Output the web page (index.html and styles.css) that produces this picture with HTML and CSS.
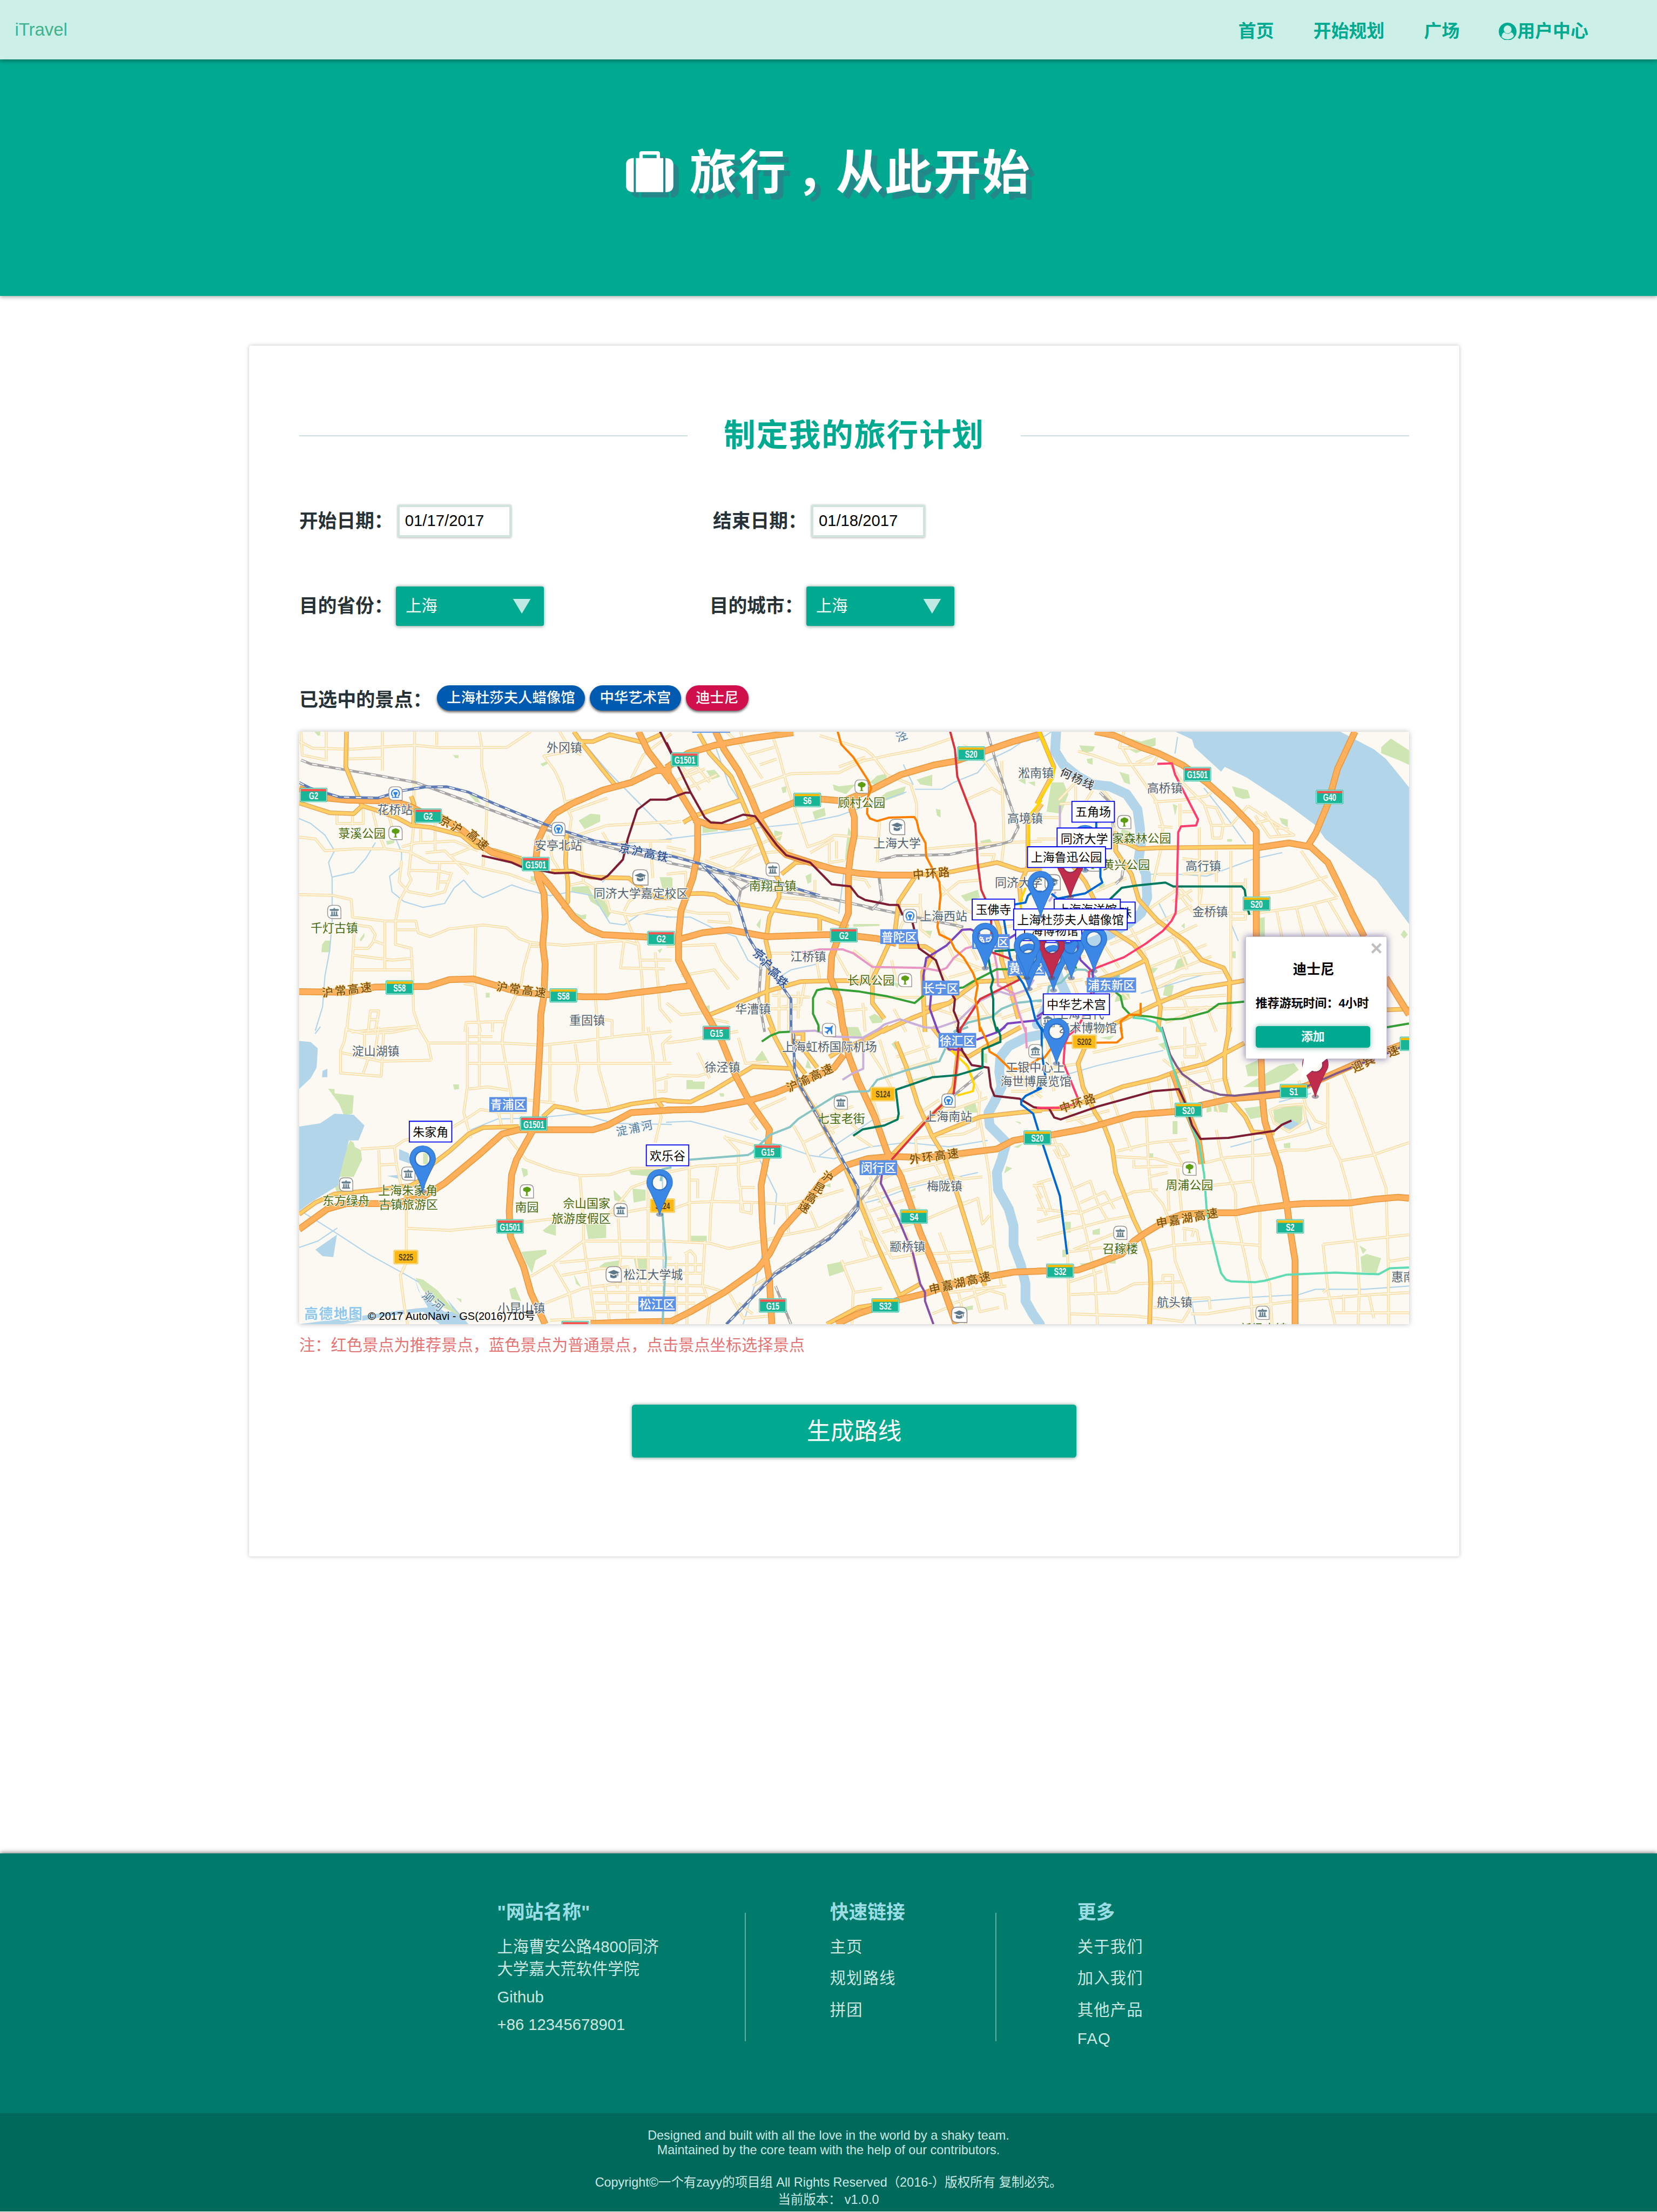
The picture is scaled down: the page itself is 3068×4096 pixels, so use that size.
FILE: index.html
```html
<!DOCTYPE html>
<html lang="zh-CN">
<head>
<meta charset="utf-8">
<title>iTravel</title>
<link rel="stylesheet" href="styles.css">
</head>
<body>
<header class="navbar">
  <a class="brand">iTravel</a>
  <nav class="nav-links">
    <a>首页</a><a>开始规划</a><a>广场</a>
    <a class="user-link"><svg class="user-icon" viewBox="0 0 37 36"><circle cx="18" cy="18" r="18" fill="currentColor"/><path d="M5.700 29Q6.500 20.500 11 19.300Q18 26 25 19.300Q29.500 20.500 30.700 27Q26 33.600 18 33.600Q10 33.600 5.700 29Z" fill="#ccefe8"/><ellipse cx="18" cy="13.600" rx="7.900" ry="8.200" fill="#ccefe8"/></svg>用户中心</a>
  </nav>
</header>
<section class="hero">
  <h1 class="hero-title"><svg class="bag-icon" viewBox="0 0 97 83"><path fill="#fff" fill-rule="evenodd" d="M27 14V5Q27 0 32 0H64Q69 0 69 5V14H75.600V83H20V14ZM34 14H62V7H34ZM15.700 14V83H14Q0 82 0 69V28Q0 15 14 14ZM80 14H82Q96 15 96 28V69Q96 82 82 83H80Z"/></svg><span>旅行<span class="comma">，</span>从此开始</span></h1>
</section>
<main class="card">
  <div class="card-head"><i></i><h2>制定我的旅行计划</h2><i></i></div>
  <div class="row dates">
    <label>开始日期：<span class="date">01/17/2017</span></label>
    <label>结束日期：<span class="date">01/18/2017</span></label>
  </div>
  <div class="row places">
    <label>目的省份：<span class="select">上海<b></b></span></label>
    <label>目的城市：<span class="select">上海<b></b></span></label>
  </div>
  <div class="picked"><span class="picked-label">已选中的景点：</span><span class="tag">上海杜莎夫人蜡像馆</span><span class="tag">中华艺术宫</span><span class="tag hot">迪士尼</span></div>
  <div class="map">
    <svg class="map-canvas" viewBox="606 1482 2248 1200">
      <defs>
        <g id="minor">
          <path class="a" d="M20,29L25,150 125,175M12,80L70,115 230,120 400,105 500,100 600,112 880,110 980,29M125,29V180M360,29V230M495,29L492,290 490,520 480,640 470,760 480,790 430,900 415,1000 415,1120 480,1140 487,1300 490,1460 520,1568M587,29V100M765,29L775,110 775,210 800,340 790,600 780,720M210,170L360,165M12,570L80,580 120,640 250,630 370,630 470,645 560,700 680,700 780,730 890,760 1000,810M170,450V500H280V420M235,450V510M320,440L340,540 370,630M385,450L400,520M440,620L500,600 660,590 760,640M580,500V640M520,530V600M540,650L620,640 720,760M640,670L740,620M440,690L430,800 470,850 560,870 620,850 650,750M470,740L600,745 650,760M600,700L590,840M600,800H640M12,865L150,868 230,890 235,980 370,1000 500,1000 510,1060 560,1080 640,1040 780,1020 880,1035 930,1090 980,1110 1120,1125 1270,1110 1370,1100 1430,1120M245,1000L235,1200 225,1400 210,1568M370,1000V1250M420,1045H510M250,1020L310,1030 330,1070 320,1110 300,1140 240,1140M320,1100L370,1120M235,1175L400,1200 490,1190M230,1250H485M750,1030L745,1310 760,1500 770,1568M980,1110L950,1240 940,1320 880,1480 865,1568M980,1130H1030M1250,1110V1400L1258,1500 1320,1510V1568M1370,1100L1355,1240 1540,1245M1440,1200H1568M1430,1120L1445,1300 1450,1568M1500,1160L1510,1300 1520,1450 1568,1520M700,1320L745,1330M300,1568L310,1460 345,1460 330,1568M305,1505H345M230,1568L500,1540M705,1568L710,1520 870,1515M820,1515V1568M1100,29L1140,110 1190,150M1190,120L1035,155 1080,230 1110,310 1125,400 1150,470 1140,560M1125,390L1300,330M1140,440L1300,370M1400,270L1450,150 1568,40M1150,570L1300,510 1450,500 1568,490M1130,620L1190,610 1200,800M1050,560L1070,680 1110,760M1280,545L1310,610 1400,590 1568,590M1480,600L1490,780M1130,820L1200,800 1250,840 1300,900 1310,950 1400,970 1520,940 1568,940M1370,950L1390,900 1450,850M1370,960L1400,1050 1430,1120"/>
          <path class="b" d="M250,29L310,100 335,150 450,110M335,150L400,270M310,29L320,100M390,200L460,170M440,40L470,150 500,290 540,440 590,620 660,590 700,560 890,580M340,320L520,245 720,240 820,180 930,150 1060,120 1200,60M640,50L720,80 830,120 860,150 920,250 1020,300 1045,400 1045,480M720,210L830,160M60,200L140,330M100,170L180,290M40,280L160,220M70,330L210,250M60,250L130,210M0,500L60,490M0,620L80,640M20,650L150,700M180,680L400,600 480,560M270,740L360,620M250,740L400,650 530,640M160,690L270,740 420,800M480,850L620,850 620,790M0,760L80,750 80,850M0,930L130,960 260,960 270,1010 170,1000M480,880L600,890 720,950M680,600L680,700 740,690M710,590V680M600,650L700,580M890,490L880,700M1090,630L1220,615 1390,600 1568,590M1400,180L1410,600 1400,700M1240,100L1310,150 1400,300M1250,380L1360,320 1400,350M1310,660L1370,660 1360,700M770,780L830,790 850,830M960,920H1060L1070,980M1140,810L1190,880 1260,950 1350,980M1150,870L1220,800 1310,790M1060,860L1060,1040 1100,1080M990,1000L960,1080M430,1165L520,1165M0,1130L200,1120 230,1200 300,1300M60,1280L200,1250 260,1350M620,1150L640,1300M710,1170L760,1280M940,1200L960,1310M780,1150L860,1230 850,1300M860,1390L1060,1390M480,1440L560,1430 580,1300M440,1380L600,1390M470,1350V1568M510,1380V1568M550,1360V1500M430,1450H560M670,1410L740,1460 840,1450M180,1500L260,1520M0,1420L60,1480 150,1470M820,1420L830,1568M1100,1180L1200,1350 1290,1420M1150,1050L1200,1190 1330,1250M1200,1000L1260,1100 1300,1200M1100,1440L1250,1500 1400,1480M1180,1420L1220,1568M1300,1400L1390,1568M950,1450L1000,1568M1380,1040L1500,1010M1400,1200L1568,1150M1420,1300L1568,1230M1430,1400L1568,1340M1500,960L1540,1260M1180,1290L1380,1220M1400,1500L1568,1430"/>
          <path class="c" d="M170,130L230,150 340,200 480,195 500,150M360,29L340,110 440,120M350,110L390,200 430,270 490,380 520,520 510,640M480,390L600,380 700,360 720,340M410,190L480,150M545,180L600,290 690,400 720,510 800,510 870,410M590,400V520M500,515L560,520M600,440H650M670,520V900M690,410L740,420 770,500 760,575 725,575 720,515M870,410L1060,560 960,570 900,460M940,440L1000,560M900,500L960,480M980,520L1040,530M740,640L740,800M800,640V1568M500,760H580M510,640L480,800M600,680L740,700M600,760L740,750M860,780V990H800M800,810H860M1090,640L1160,770 1240,880M910,860L1000,850 1060,830 1200,770M560,820L640,950 660,960 900,960 1080,930 1240,880M590,830L640,900M640,840L560,900M680,830L670,920 740,920M990,950L1010,1080M1070,930L1100,1080M1140,910L1200,1080M1200,890L1290,1080M90,380L160,290 260,310 320,400V560M95,400L200,390 230,330M0,470H90M0,580H90M160,310V400M200,380L260,500M390,1000L600,820M420,1060L640,920M300,1120L420,1060M440,1150L660,1020M460,1240L700,1120M480,1300L720,1180M500,1340L600,1280 780,1260M380,1020L450,1180M560,1060L620,1250M600,1100L660,1180M280,1130L340,1240M520,1450L790,1440M530,1520L700,1440 740,1568M600,1380L650,1568M510,1400L780,1380M240,1200L380,1400M250,1450L330,1350M0,1240L200,1180M0,1330L190,1300M100,1180L190,1440M250,980L330,1090M240,850L370,780"/>
          <path class="d" d="M210,0L200,70 185,110V215L355,230 365,30M190,120L350,160 565,155M205,10L280,30 400,25 510,0 550,75 860,75 1030,85 1200,65 1370,40 1568,20M285,30V110M300,150L280,215M345,0L325,150M550,75L565,155M715,0V280L700,400 730,520M765,0V280M865,0L860,75 880,200 900,330V450M720,170H1568M720,290L800,280 885,295M720,45H820M1060,85V350M1165,80L1180,190 1165,290 1175,350M1260,0V90L1265,200 1310,380M1320,0V45M1470,0L1490,130 1500,350 1525,420 1500,540M1568,40L1530,80 1540,160M1500,250L1568,230M1545,250V300H1510M650,470L710,430 770,385 850,400 960,400M845,400L860,470M960,340L1080,355M270,570L410,560 450,530 490,520M345,575L350,750M410,560L420,650 440,750M345,645L420,640M460,790V940L640,950 820,930 1040,900 1300,880 1450,850 1568,840M460,940V1100L435,1160 450,1290 465,1388M880,510L960,620 1080,670 1190,695 1310,690 1400,660 1568,660M1185,695L1200,900 1200,1000 1220,1150 1250,1388M1345,895L1355,1080 1340,1220M1200,1000H1568M980,1165L1070,1105 1200,1000M1070,1105L1140,1240 1160,1388M1040,1290L1200,1220 1340,1200 1568,1205M1100,1100L1340,1075 1568,1080M1110,1160L1260,1130 1390,1120M1060,1370L1240,1360M1240,1240H1568M1250,1290H1568M1250,1330H1420M1290,1200L1310,1388M1385,1120V1388M1470,700V1290M1420,1070L1440,1240M1300,880L1350,820 1400,750 1470,720"/>
          <path class="e" d="M0,75L100,60 300,20M0,225L130,230 210,200M130,120L180,240M300,50L330,170 420,160M350,440L400,380 500,330M350,440L380,480M240,510L300,580 300,700 320,860M240,515L390,560M300,750H370M310,750V860L355,870V820M0,680L130,650 300,640 390,620M95,630V1000M215,640L185,850 180,1000M100,715H130V800M0,860L100,820 200,815 390,820 500,830 620,800 740,760M0,1000L180,1010 260,1035 400,1000 500,970 640,940 760,870M500,820L510,960M600,860L630,940M530,460L570,540 620,680M570,540L720,460M780,500L860,560M620,360L700,500M640,430L780,370M700,380L800,480M750,650L900,600M740,640L800,760 840,860 880,960 940,1080M800,760L960,680 1120,640 1350,570M840,800L1000,740 1180,690 1240,710 1320,700M850,860L1040,790M880,900L1060,850M900,960L1080,900 1270,810M940,1080L1100,1050M1120,640L1180,760M850,700L960,960M960,680L1000,740M1040,520L1050,650M1040,520L1240,500 1300,470 1310,300M1310,430L1350,700 1360,900 1370,1020 1400,1210M1240,830L1300,800 1320,920 1350,880M1180,700L1240,750M810,950L830,1030 850,1080 740,1110 730,1090M730,1090L780,1230 775,1388M780,1240L900,1220M850,1080L940,1050M810,980L880,1010M1000,960L1060,1200M1100,1060L1270,1050 1370,1020M1130,1100L1280,1090M1140,960L1180,1080 1200,1190M1180,1240L1420,1210M1200,1290L1350,1230 1410,1250 1420,1320M1220,1240L1250,1388M1280,1210L1310,1330 1390,1310M1110,1340L1200,1300M1530,740H1568M1540,740L1568,800M1550,990H1568M0,1110H150M0,1150H150M85,1050V1388M75,1060L100,1045 120,1070V1150M0,1205L160,1210 250,1240M40,1100V1388M160,1000L150,1200 180,1300 170,1388M0,1290H120M0,1250H170M260,1240L320,1360 430,1350M300,1290L360,1340M360,1210L440,1160M960,140L1100,90M980,200L1130,150M1000,260L1110,240M890,60L940,240M1050,0L1120,240M1060,400L1140,340M1250,170L1310,320M1110,420L1340,330M820,60L900,200 960,330M860,330L890,440 990,420M1480,210L1530,330M1440,300H1568M1420,200L1568,330"/>
          <path class="f" d="M70,520L110,640 150,760 180,860 210,1000 240,1170 250,1388M0,550L100,550 130,600 90,610 70,570M0,730L60,710M140,760L220,720 250,820 290,900M180,820L280,770 320,850M0,850L180,870 360,790 400,770 500,760M0,910L170,860M0,990L200,930 300,900 400,880M150,1040L330,960M130,1050L270,1030M20,730L60,860M0,780L40,880M125,1000L135,1388M135,1190L270,1140M140,1250L330,1240 400,1200 600,1190M280,1110L300,1250M140,1340L400,1350 600,1375 630,1320 620,1240 570,1090 560,940 520,830 470,760 460,640 455,500 450,400M330,580L480,540 620,525M320,605L490,615 560,640 620,650M400,655L540,650M400,620V660M550,540L600,640M540,740L545,860M580,660L600,900M460,700L540,680M580,590L630,580M690,635L780,610 950,595 1030,575 1110,575 1220,550 1200,500 1200,260M720,740L890,720M890,500L890,720 920,850 920,1080 960,1200 970,1388M740,480L760,600 820,780 820,880 860,1080 880,1200 890,1388M440,1050L560,1020 740,1005 920,1020M600,940L660,950 670,1010M610,950V1000M650,940L640,980M480,1310H560V1160H520V1200M560,1310L620,1270 710,1265 715,1320M635,1340L700,1340 860,1310 1060,1280 1380,1250 1535,1240M1080,250L1110,370 1150,440 1200,460M980,530L1130,490 1200,460M1220,550L1250,620 1290,780 1300,900 1320,1050 1330,1230 1325,1388M1260,210L1310,340 1380,560 1440,750 1450,1150 1450,1388M1250,625L1380,600 1535,540M1260,810L1300,830M1180,1015L1535,970M1180,1015L1200,1220 1180,1240M1200,1230L1230,1388M1230,1335H1535M1265,1250V1330M1370,1250L1390,1360M1450,1095L1535,1080M540,100L700,80M610,0V140H660V80M640,0L720,260 750,400M520,150L640,260M540,220L560,390M300,300L350,460 390,580M460,260L480,390M600,160L640,350M560,290L790,240M540,240L700,200M960,390L1000,370 1100,360 1110,440 1040,490 980,450ZM120,440L300,390M130,400L210,470M230,120L500,50M60,190L180,170M40,60L70,300"/>
        </g>
        <g id="major">
          <path class="a" d="M210,29L207,210 240,310 275,410M12,395L140,445 240,450 275,410 330,430 420,470 480,510 560,520 690,560 750,620 830,640 940,680M490,520L492,400 480,360M1160,29L1200,100 1270,210 1330,300M1180,80L1240,80 1310,45 1450,85 1530,40M1065,745L1150,745 1230,775 1390,780 1440,830 1500,880 1568,880M1130,555L1125,700 1135,800 1135,900 1115,940"/>
          <path class="b" d="M135,40L180,140 270,260 310,370 380,570 420,700 470,790 470,880 430,980 415,1100 430,1180 420,1350 420,1470 450,1568M70,495L120,460 310,380M480,760L540,700 590,700M95,860L150,858 200,865 260,905 480,950 630,975 760,1030M640,980L640,1050M180,1480L300,1420 420,1360 560,1310 740,1305 860,1310M1040,770L970,900 955,1050 920,1140 860,1300 860,1420 910,1500M1040,765L1180,750 1380,700 1480,740 1568,730M970,1130L1080,1130 1120,1160 1070,1260 1075,1430 1080,1568M1350,900L1390,1040 1400,1200 1430,1320 1470,1500M1075,1450L1180,1420 1300,1310 1420,1305 1568,1260M900,1568L1020,1500 1180,1420M1480,900L1475,820 1510,720 1510,500 1568,400"/>
          <path class="c" d="M10,29L70,210 60,260 0,400M325,540L325,640 390,760 420,890 500,1000 620,1110 680,1200 770,1240 795,1300 790,1568M325,590L370,600 420,630 500,625 912,620M150,720L200,800 240,900M300,1040L400,1120 450,1200 480,1320 510,1440 500,1568M200,1320L350,1260 450,1200M240,1568L330,1520 500,1420 640,1350 855,1305M1440,1455L1535,1450"/>
          <path class="d" d="M12,875L80,820 160,780 350,760 480,740 540,700 570,640 640,580 720,500 780,470 930,465M1030,420L1080,370 1130,380 1200,400 1300,390 1400,360 1530,340 1568,345M450,795L520,790M1510,345L1530,375"/>
          <path class="e" d="M430,0L510,170 560,280 640,430 740,640 800,800 880,1020 960,1220 980,1270M0,345L100,350 190,300 360,185 530,195M530,30L570,30 570,70 530,70ZM530,150L580,220M550,70L630,190M680,140L740,100 850,50 930,0M670,1388L800,1310 860,1300M980,1250L1060,1200M960,70L1000,180 1050,360 1110,510 1160,600 1220,800 1270,980 1330,1210M1110,510L1220,460 1310,420 1470,400 1568,390M1110,0L1180,100 1260,140 1350,80 1480,0M940,600L1090,430 1150,370 1200,280 1220,100"/>
          <path class="f" d="M200,90L170,170 190,280 240,400 280,470 310,560 325,680 400,900 430,970 465,1090 470,1200 465,1388M0,385L120,380 240,330 350,280 500,240 580,205 700,170 780,120 855,75M795,0L775,120 775,240 800,340 860,420 890,490 980,495"/>
        </g>
        <g id="motorway">
          <path class="a" d="M12,320L60,345 130,370 210,380 400,385 470,410 520,440 600,465 690,530 760,600 820,650 900,680 990,720 1060,820 1110,900 1160,980 1220,1040 1280,1070 1440,1080 1568,1090M1568,225L1500,230 1400,290 1280,330 1150,400 1080,450 1040,510 1010,590 1000,700 1010,780 1035,860 1040,980 1030,1120 1040,1220 1035,1380 1022,1480 1020,1568M12,1362L220,1365 330,1338 550,1335 640,1300 740,1297 820,1325 930,1365 1040,1375 1200,1388 1300,1388 1400,1370 1568,1345M1430,29L1470,130 1520,210 1568,290"/>
          <path class="b" d="M0,215L90,140 200,100 350,65 530,35M0,230L50,330 110,450 130,500 130,650 110,780 60,950 50,1080 50,1200 100,1320 150,1440 210,1568M205,29L240,120 300,230 350,360 390,480 450,600 500,660 600,700 700,735 800,755 900,765 1040,765M115,480L180,510 260,520 330,500 420,450 540,390 600,370 640,375 740,385 860,325 980,250 1120,200 1210,180 1330,130 1450,80 1568,40M760,370L785,470 785,560 770,650 760,750 760,960 720,1080 690,1180 685,1290 720,1400 740,1568M50,1095L150,1060 260,1045 420,1080 660,1070 740,1070 880,1090 960,1115M0,1345L110,1330"/>
          <path class="c" d="M240,29L320,50 430,110 500,140 600,200 700,290 800,400 870,490 905,540 905,1080M1312,29L1240,220 1200,400 1150,550 1120,610M905,625L1040,600 1130,620 1200,700 1260,850 1300,960 1350,1080M1440,1290L1535,1480M905,1070L930,1568"/>
          <path class="d" d="M1022,0L1015,150 1000,420 985,490 920,620 900,690 890,860 895,980 950,1120 980,1240 1040,1388M12,945L130,850 210,825 400,825 520,800 620,730 760,600 860,500 930,480 1240,480 1300,460 1400,400 1568,388M1230,1385L1400,1378 1568,1375"/>
          <path class="e" d="M0,388L150,385 340,345 450,310 600,240 700,190 740,130M225,50L290,230 345,345 430,480 420,600 395,740 400,900 410,1050 430,1180 440,1388M740,0L760,130 800,250 870,420 920,580 980,700 1020,830 1060,960 1150,1200 1210,1388M0,1385L100,1330 240,1240 380,1130 430,1060 480,950 560,850 650,720 740,650 840,615 940,605 1090,610 1380,570 1450,530 1500,520 1568,510M710,1388L800,1340 880,1310 970,1275 1080,1245 1180,1205 1300,1175 1450,1145 1568,1140"/>
          <path class="f" d="M0,1140L170,1135 270,1095 350,1060 400,1000 450,960 540,900 600,875 700,868 820,868 900,850 1040,830 1100,825 1290,822 1390,805 1490,795 1535,800M0,515L58,505 200,475 280,450 400,410 570,395 680,365 800,335 920,325 1000,315 1110,275 1300,180 1440,110 1535,70M925,150L930,330 940,440 970,550 1000,650 1030,820 1045,950 1065,1090 1065,1388M560,210L610,370 640,450 665,520 680,640"/>
        </g>
        <g id="rail-gray">
          <path class="a" d="M20,175L60,195 300,245 500,290 700,380 1010,520 1230,600 1568,700"/>
          <path class="b" d="M0,700L250,760 430,840 700,890 850,930 1000,970 1240,1030M885,750L900,890 860,940 820,920M890,690L960,665 1180,660 1400,605 1440,590 1470,520 1430,380 1380,200 1340,29M260,780L310,840 300,900M350,810L310,840M395,1220L385,1400 410,1568"/>
          <path class="c" d="M260,340L300,390 315,520M355,740L350,780 325,810"/>
          <path class="e" d="M1320,210L1200,320 1090,430 930,620 840,770 780,850 700,960 450,1150 250,1388M455,1210L520,1388"/>
        </g>
        <g id="rail-blue">
          <path class="a" d="M12,290L60,320 180,365 340,370 430,335 540,313 630,312 720,340 830,400 1040,505 1110,535 1250,590 1400,620 1568,670"/>
          <path class="b" d="M0,660L150,710 230,745 450,800 640,870M150,715L240,830 300,920 340,1080 400,1200 480,1330 520,1400V1568"/>
          <path class="e" d="M530,30L535,200 560,280 700,550 800,750 800,850 770,890 680,990 450,1160 250,1388"/>
        </g>
        <g id="sh-g"><rect x="-28" y="-14.5" width="56" height="29" rx="3" fill="#18b596"/><rect x="-26.5" y="-13" width="53" height="26" rx="2" fill="none" stroke="#b5ecdf" stroke-width="1.4"/><path d="M-25.5-12H25.5V-7.5H-25.5Z" fill="#ff5350"/></g>
        <g id="sh-s"><rect x="-28" y="-14.5" width="56" height="29" rx="3" fill="#18b596"/><rect x="-26.5" y="-13" width="53" height="26" rx="2" fill="none" stroke="#b5ecdf" stroke-width="1.4"/><path d="M-25.5-12H25.5V-7.5H-25.5Z" fill="#ffb900"/></g>
        <g id="sh-y"><rect x="-25" y="-14.5" width="50" height="29" rx="3" fill="#fcb814"/><rect x="-23.5" y="-13" width="47" height="26" rx="2" fill="none" stroke="#ffe49b" stroke-width="1.4"/></g>
        <path id="poi-box" d="M-13.500-4Q-13.500-13.500-4-13.500H4Q13.500-13.500 13.500-4V13.500H-4Q-13.500 13.500-13.500 4Z" fill="#fff" stroke="#948f8c" stroke-width="1.5"/>
        <g id="tree"><use href="#poi-box"/><path d="M-7.500-4Q-7-8-3-8Q0-11 4-8Q9-7 8-3Q7 1 3 1L1.500 2V7L4 9H-4L-1.500 7V2L-4 0Q-8 0-7.500-4Z" fill="#5d9d12"/></g>
        <g id="temple"><use href="#poi-box"/><path d="M0-9L2-6H8L10-4L7-2H-7L-10-4L-8-6H-2ZM-6-1H-3V6H-1.500V-1H1.500V6H3V-1H6V6H8V8.500H-8V6H-6Z" fill="#67818f"/></g>
        <g id="museum"><use href="#poi-box"/><path d="M0-9L9-4V-2H-9V-4ZM-7-1H-4V5H-7ZM-1.500-1H1.500V5H-1.500ZM4-1H7V5H4ZM-9 6H9V8.500H-9Z" fill="#67818f"/></g>
        <g id="station"><use href="#poi-box"/><path d="M-5 6A8 8 0 1 1 5 6" fill="none" stroke="#2f83e0" stroke-width="2.400"/><path d="M-4-3H4V1L1.500 3V7H7V9H-7V7H-1.500V3L-4 1Z" fill="#2f83e0"/></g>
        <g id="school"><use href="#poi-box" transform="scale(1.15)"/><path d="M0-9L12-4L9-2.800V4H7.500V-2L0 1L-12-4ZM-7 0L0 3L6 0V6Q0 10-7 6Z" fill="#60798a"/></g>
        <g id="plane"><use href="#poi-box"/><path d="M8-8Q9-10 6-8.500L2-5L-8-6L-9-4L-1-1L-5 3L-8 3L-9 4L-5 6L-3 9L-2 8V5L2 1L5 9L7 8L6-2Z" fill="#2f83e0"/></g>
        <g id="pin-shape"><ellipse cx="0" cy="-1" rx="7" ry="4" fill="#44516a" opacity=".5"/><path fill-rule="evenodd" d="M0 0Q-4-16-21-51A26 26 0 1 1 21-51Q4-16 0 0ZM14.500-66A14.500 14.500 0 1 0-14.500-66A14.500 14.500 0 1 0 14.500-66Z" stroke-width="1.200"/><path d="M15.500-66A15.500 15.500 0 1 1-15.500-66A15.500 15.500 0 1 1 15.500-66" fill="none" stroke="#123f80" stroke-opacity=".25" stroke-width="2"/></g>
      </defs>
      <rect x="606" y="1482" width="2248" height="1200" fill="#fcf9f2"/>
      <g class="green">
        <path class="a" d="M75,29H100V50L165,55 90,50ZM655,150H678V165H665ZM1020,195L1055,178 1050,195 1030,208ZM1180,485L1230,450 1270,455V490L1205,530ZM720,350L745,345 770,395 785,400 750,390ZM375,590L410,585V600L380,610ZM1150,825L1220,820 1240,870 1290,900 1315,960 1300,985 1270,930 1230,900 1215,860 1150,850ZM1155,950L1190,970 1212,965 1210,990 1185,990ZM120,1100H143V1120L140,1160H105L108,1120ZM265,1095L285,1060 285,1080 270,1105ZM792,1368H808V1392H792ZM1518,775H1568V840L1530,835ZM1510,1150L1530,1140 1520,1165ZM980,770H1000V795H980Z"/>
        <path class="b" d="M150,490L200,485 215,540 150,550ZM165,230L200,225 225,260 190,275ZM450,535L485,545 475,590 450,580ZM480,315L500,310V340L485,345ZM610,440L660,420 665,460 620,480ZM695,300L720,310 790,300 750,350 700,330ZM850,290L880,255 920,245V290L880,310ZM920,340L1000,310 990,350 900,390 860,395ZM1045,275L1110,250V310L1060,300ZM760,520L780,560 765,650 745,700 750,620ZM580,770L605,755V800L590,810ZM0,780H25V825H0ZM1125,425L1145,430V470L1130,460ZM1230,870L1300,840 1310,880 1250,900ZM1310,590L1350,580 1370,610 1330,630ZM1470,280L1500,260V300ZM1510,290L1540,285V310ZM780,1015L890,1015V1025L780,1030ZM375,1020L395,985 390,1040ZM845,1490L870,1475 905,1500 900,1520 860,1525ZM940,1310L970,1320 965,1345ZM1080,1050L1110,1050 1100,1090ZM1185,750L1220,745 1200,760ZM155,1440L180,1430V1480Z"/>
        <path class="c" d="M175,100L240,105 230,130 190,140ZM205,170L230,165V200L210,190ZM370,60L430,80 490,60V100L410,140 380,120ZM340,235L380,250 385,300 360,290ZM560,400L580,410 570,460ZM805,310L870,330 880,370 850,375 820,360ZM60,290L110,290 130,350 100,450 40,440ZM1000,470L1035,480V520L1010,500ZM785,580H805V593H785ZM1420,110L1460,65 1535,125V200L1500,180 1420,140ZM1500,1070L1515,1045 1530,1070 1515,1090ZM580,1200L610,1180 625,1230 560,1270ZM530,1325L565,1330 555,1390 520,1380ZM330,1380L380,1370 385,1400 320,1415ZM805,1155H820V1190H805ZM895,990L940,980V1080H900ZM610,1010V1040L595,1025ZM350,530L385,540 400,600 340,580ZM255,805L280,810V840H258ZM460,1240L500,1240 480,1270Z"/>
        <path class="d" d="M133,288L160,290V310L240,320 235,405 200,415 180,360ZM655,268H680V290L660,293ZM225,530L240,540 245,560 270,575 275,620 240,700 180,700 195,600ZM160,740L230,710 235,750 170,775ZM940,657L965,665 968,690 950,702ZM890,1225L915,1215 940,1280 900,1270ZM940,1050L1045,1040V1060L1000,1090 985,1150 960,1100ZM1030,950L1065,920 1085,925V975L1040,960ZM1210,920H1295V985L1220,990ZM1325,760L1380,820 1330,810ZM1405,755L1460,760V810L1410,820ZM1390,670L1500,665 1500,700 1400,690ZM1410,1080H1470V1130H1420ZM1290,1100L1350,1090V1130L1265,1120ZM1160,1155L1190,1215 1170,1200ZM668,1265L690,1270V1288ZM530,590H550V640H530Z"/>
        <path class="e" d="M83,248H110V255H160L158,290H83ZM220,310H240V325H225ZM370,150L400,110 430,170 380,165ZM755,0H800L820,50 760,40ZM590,150L605,195 580,190ZM102,975H168V1005H102ZM670,1110L735,1095 745,1140 680,1165ZM940,80L960,60V110ZM1240,370L1290,350 1300,400 1250,400ZM1310,120L1340,125V170L1315,160ZM1455,440L1480,445V455ZM1420,650L1445,660 1410,685ZM1450,560L1490,545 1470,565ZM660,740L685,730V750ZM880,820L900,800V820ZM1240,1310L1280,1300V1320L1250,1325ZM1010,250L1090,230 1060,260ZM1010,770L1040,750V765Z"/>
        <path class="f" d="M850,280L1000,180 1060,170 1080,200 1020,250 930,280ZM860,180L910,155V230L870,230ZM730,350L790,360 785,400 730,395ZM700,370L720,375V395L700,400ZM855,380L920,370 930,420 880,430ZM975,390L1030,370 1095,370V430L1080,470 1040,480 980,440ZM560,440H580V500H560ZM260,50L320,40 300,60ZM1018,545L1045,540V565H1020ZM115,910H140V960H115ZM175,1105L230,1100 210,1130ZM300,1090L325,1085V1105H300ZM1335,1075L1360,1060 1420,1080 1400,1150 1340,1145ZM1330,1020L1360,1040 1345,1060ZM465,590H480V610H465ZM230,950L260,940V970H230ZM500,80L530,70V110ZM105,1040H120V1075H105Z"/>
      </g>
      <g class="water">
        <path class="c" d="M570,29L640,70 650,110 760,235 775,210 865,265 1030,400 1150,510 1190,580 1300,690 1400,790 1535,1015V315L1480,230 1440,170 1390,120 1250,29Z"/>
        <path class="d" d="M12,65L60,70 90,100 85,190 60,240 12,290ZM12,465L100,450 160,405 240,410 285,460 260,530 220,530 185,680 175,740 60,820 12,860ZM110,205L130,195V235H108ZM430,570L470,590 480,640 430,620ZM80,1040L170,970 155,1075 110,1070ZM490,1160L520,1250 620,1330 660,1330 630,1270 720,1388H600L530,1330 380,1350 200,1388H12L300,1345 500,1315 550,1310 510,1230ZM380,695L440,690 430,710Z"/>
        <path class="f" d="M1010,450L1050,430 1090,460 1060,480 1020,470ZM0,1370L10,1388H0Z"/>
      </g>
      <g class="green"><path class="d" d="M498,1172L530,1180 590,1230 650,1310 685,1350 580,1290 530,1230Z"/></g>
      <g class="stream">
        <path class="a" d="M12,475L60,500 120,560 160,640 135,700 150,780 150,1000 140,1150 120,1280 110,1440 80,1560M150,775L240,750 290,680 310,640 330,600M410,560L440,650 440,720 390,770 400,850 450,900 530,930 620,910 660,830 700,790 740,850 780,880 840,850 900,815 960,840 1060,870 1150,850 1240,870 1280,950 1310,1010 1370,1020 1440,960 1568,980M1160,29L1300,230 1420,380 1500,480 1568,560M1280,800L1360,700 1390,600 1568,580"/>
        <path class="b" d="M0,580L200,550 400,520 560,500 720,460 860,400 1000,340M1040,325L1150,325 1200,290 1300,240 1340,180 1440,120 1500,70 1568,65M200,90L260,300 330,430M0,980L100,980 200,1040 290,1080 340,1200 400,1250M480,1280L520,1250 630,1220M740,760L720,960M990,200L1030,300"/>
        <path class="c" d="M580,60L570,140M440,760H580L700,770 900,680 1010,650M690,320L760,430 860,600M500,900L540,1000M800,1010L830,1100M430,1370L700,1270M0,80L60,30"/>
        <path class="d" d="M20,860L150,950 300,1060 430,1140 510,1190M12,1030L90,1000 170,940M730,480L840,430 1000,425 1180,405 1330,450 1568,455M1530,665L1535,1388M80,30L100,0"/>
        <path class="e" d="M0,445L100,440 200,470 390,530 500,560 600,600 700,615 760,590 850,560 1000,540 1180,560 1340,530M380,600L460,780 450,920M400,1060L370,1200 320,1388M640,600L880,420M800,830L900,800 1020,750 1300,680"/>
        <path class="f" d="M40,250L250,180 520,110M640,1285L850,1265 1080,1250 1150,1225 1350,1225 1535,1210M1000,350L1130,310M800,560L930,520M1110,420L1130,480M640,1290L655,1388"/>
      </g>
      <use href="#minor" class="minor-case"/><use href="#minor" class="minor-fill"/>
      <g class="river">
        <path class="c" d="M80,29L75,130 110,200 170,260 230,300 300,310 370,350 415,430 425,520 430,600 420,680 450,760 455,880 430,960 380,1010 300,1070 200,1120 120,1150 70,1190 90,1290 120,1370 40,1440 0,1530"/>
        <path class="e" d="M1568,35L1500,50 1430,90 1395,140 1390,210 1400,280 1370,350 1345,400 1350,460 1385,500 1420,540 1400,620 1380,680 1385,760 1430,850 1450,930 1450,1020 1480,1110 1500,1200 1500,1280 1530,1340 1560,1388"/>
      </g>
      <use href="#rail-gray" class="rail gray"/><use href="#rail-gray" class="rail-dash"/>
      <use href="#major" class="major-case"/><use href="#major" class="major-fill"/>
      <use href="#motorway" class="motor-case"/><use href="#motorway" class="motor-fill"/>
      <use href="#rail-blue" class="rail blue"/><use href="#rail-blue" class="rail-dash"/>
      <g class="metro">
        <g stroke="#c8b0d8"><path class="e" d="M515,22L620,17 700,45 820,50 900,0M822,50V195L780,215 735,247"/><path class="b" d="M870,1568L910,1530 975,1503 1080,1545 1130,1548 1220,1510 1300,1415 1390,1360 1440,1380 1510,1350 1535,1300"/><path class="c" d="M95,408V520M78,850L50,900"/></g>
        <g stroke="#88c5c5"><path class="d" d="M1568,655L1530,665 1523,720M1530,870L1545,1080 1530,1388"/><path class="e" d="M95,620L340,598 360,585 385,555 430,505 515,468 550,430 710,318 770,303 845,300 880,247 1000,203 1140,160 1165,100M1200,25L1260,0"/><path class="b" d="M1200,1568L1260,1520 1360,1490 1400,1450 1460,1420 1568,1405"/><path class="c" d="M0,1410H20M45,1370L50,1335 100,1315 130,1275 165,1248 200,1250 245,1290M310,1295L342,1280"/></g>
        <g stroke="#805a88"><path class="f" d="M515,0L550,130 575,180 600,220 690,293 755,316 815,321 1005,298M1110,280L1240,215 1350,165 1440,125 1500,95"/></g>
        <g stroke="#7b45c0"><path class="b" d="M1105,1380L1100,1450 1135,1568M1073,1310V1280L1085,1190 1170,1125 1235,1045 1270,1042 1310,1065M1430,1090L1470,1060M1390,1568L1425,1525 1540,1510 1568,1490"/><path class="c" d="M165,1120L180,1200 230,1260 235,1370M0,1490L60,1440"/><path class="e" d="M1130,10L1180,105 1240,108M1295,60L1380,25 1415,0"/></g>
        <g stroke="#8a4fa6"><path class="e" d="M900,690L895,730 970,900 1030,1060 1060,1200 1080,1240V1280L1115,1388"/></g>
        <g stroke="#e897c5"><path class="b" d="M520,1160H580L640,1145H735L780,1165 860,1235 1070,1240 1140,1255 1170,1240 1200,1190 1250,1140 1280,1130M1350,1150L1370,1170 1380,1230 1385,1330 1450,1370 1470,1460 1500,1568"/><path class="e" d="M1500,0L1505,100"/></g>
        <g stroke="#ffd600"><path class="b" d="M1555,29L1568,70M1568,380L1515,460 1512,620M1500,830L1478,900 1482,940"/><path class="c" d="M10,29L70,215 68,265 0,400"/><path class="e" d="M1190,110L1260,185 1285,270 1280,300 1215,320"/></g>
        <g stroke="#35a035"><path class="b" d="M1430,1247H1380L1280,1310 1240,1340 1220,1343M1075,1380L1037,1420 920,1385 800,1360 665,1345 628,1355 612,1395V1475L635,1535V1568"/><path class="e" d="M635,0V12M515,22L470,25 435,40 398,68"/><path class="c" d="M325,1365L345,1385 355,1440 385,1480 470,1490 530,1505 600,1500 705,1465 750,1425 855,1413M1440,1545L1535,1525M130,1225L165,1240"/></g>
        <g stroke="#60dcb4"><path class="c" d="M395,1495L440,1500 490,1520 515,1568"/><path class="f" d="M512,0L545,130 590,290 630,440 670,550 690,690 700,850 713,940 750,1110 760,1150 780,1180 800,1188 900,1192 940,1185 1030,1157 1230,1147 1410,1155 1455,1127 1535,1123"/></g>
        <g stroke="#d83440"><path class="b" d="M1185,29L1205,120 1215,260 1290,500 1300,700 1315,840 1355,950 1358,1100M1360,1160L1440,1195 1475,1300 1310,1400 1220,1568"/><path class="e" d="M1230,0L1220,100 1200,310 1100,420 940,620"/></g>
        <g stroke="#7d1d33"><path class="a" d="M775,665L900,700 940,722 1040,745 1080,755 1160,752 1190,768 1275,787 1300,770 1365,685 1385,580 1425,430 1480,378H1550L1568,372M1520,29L1568,145"/><path class="b" d="M0,85L100,340 160,470 185,495 230,498 320,455 370,463 460,610 500,663 600,700 690,812 768,822 800,873 830,892 930,917 968,918 985,965 1020,970 1055,1140 1125,1200 1155,1300 1205,1400 1200,1460 1220,1520 1215,1568M0,378L80,342 100,342"/><path class="e" d="M1215,0L1235,110 1275,178 1345,190 1355,280 1370,322 1475,335 1535,375 1568,380"/><path class="f" d="M0,378L50,380 72,423 98,432 250,372 480,300 585,290 610,350 640,460 675,523 790,518 980,485 1010,457 1050,437"/></g>
        <g stroke="#ff8000"><path class="b" d="M715,29L730,95 780,160 845,285 855,320 840,370 838,450 850,475 880,488 930,470 1035,467 1045,485 1055,540 1082,600 1085,670 1140,800 1145,870 1132,1030 1140,1068 1185,1095 1205,1145 1240,1185 1280,1265 1300,1330 1290,1400 1300,1460 1310,1568"/><path class="e" d="M1310,0L1340,70 1350,115 1380,135 1435,195H1490L1568,140"/><path class="f" d="M0,148L30,145 60,100 120,75 330,72 353,50 345,0"/><path class="c" d="M350,1568L345,1515 380,1480H428V1420"/></g>
        <g stroke="#007a5e"><path class="b" d="M1370,1155L1480,1145 1568,1120M1345,1190L1355,1260 1365,1300 1355,1340 1365,1400V1500L1380,1568"/><path class="e" d="M1380,0L1395,40V70L1320,105V190L1215,225 1110,235 1025,268 958,293 970,405 965,432 910,460 820,478 780,508"/><path class="c" d="M300,890L350,830 410,818 530,803 563,823H845L857,840 862,880M870,940L877,968"/></g>
        <g stroke="#ff3d6e"><path class="c" d="M497,195L557,192 570,250 665,480 657,510 595,515 583,545 577,860 572,960 555,1000 520,1050 450,1115 360,1185 245,1240 215,1260V1300M225,1365L195,1480 160,1568"/><path class="f" d="M175,0L130,40 115,80 110,170 168,330 160,360 90,378 0,378"/></g>
        <g stroke="#0068d0"><path class="c" d="M245,495V540M262,728V775L270,803 200,858 85,885 60,860M0,1520L30,1568"/><path class="b" d="M1455,915L1500,905 1510,870 1530,850 1568,850M1410,995L1430,1150 1445,1240 1490,1320 1520,1400 1540,1500 1568,1560"/><path class="e" d="M1568,285L1500,322 1482,345V362L1532,405 1555,490"/><path class="f" d="M25,550L95,790 125,1062M20,0V120L38,255 0,290"/></g>
      </g>
      <g class="district">
        <path d="M1402 1482H1479V1484H1402ZM1783 1882H1859V1912H1783ZM1969 1892H2045V1922H1969ZM1867 1986H1943V2016H1867ZM2041 1946H2117V1976H2041ZM2201 1980H2301V2010H2201ZM991 2222H1067V2252H991ZM1293 2626H1369V2656H1293ZM1901 2092H1977V2122H1901ZM1741 2350H1817V2380H1741Z"/>
        <text x="1821" y="1906">普陀区</text><text x="2007" y="1916">静安区</text><text x="1905" y="2010">长宁区</text><text x="2079" y="1970">黄浦区</text><text x="2251" y="2004">浦东新区</text><text x="1029" y="2246">青浦区</text><text x="1331" y="2650">松江区</text><text x="1939" y="2116">徐汇区</text><text x="1779" y="2374">闵行区</text>
      </g>
      <g class="town">
        <text x="1143" y="1523">外冈镇</text><text x="800" y="1648">花桥站</text><text x="1131" y="1720">安亭北站</text><text x="1298" y="1818">同济大学嘉定校区</text><text x="1189" y="2075">重固镇</text>
        <text x="1817" y="1716">上海大学</text><text x="1911" y="1864">上海西站</text><text x="1637" y="1946">江桥镇</text><text x="1525" y="2052">华漕镇</text><text x="2098" y="1574">淞南镇</text><text x="2076" y="1666">高境镇</text><text x="2063" y="1796">同济大学</text>
        <text x="2359" y="1605">高桥镇</text><text x="2437" y="1762">高行镇</text><text x="2451" y="1855">金桥镇</text><text x="2188" y="2062">上海当代</text><text x="2202" y="2090">艺术博物馆</text>
        <text x="761" y="2137">淀山湖镇</text><text x="1323" y="2590">松江大学城</text><text x="1056" y="2658">小昆山镇</text>
        <text x="1680" y="2128">上海虹桥国际机场</text><text x="1463" y="2170">徐泾镇</text><text x="1921" y="2270">上海南站</text><text x="2097" y="2170">工银中心上</text><text x="2098" y="2199">海世博展览馆</text><text x="1913" y="2411">梅陇镇</text><text x="1838" y="2533">颛桥镇</text>
        <text x="2379" y="2646">航头镇</text><text x="2854" y="2595">惠南镇</text>
      </g>
      <g class="town scenic">
        <text x="733" y="1696">菉溪公园</text><text x="677" y="1888">千灯古镇</text><text x="1745" y="1634">顾村公园</text><text x="1565" y="1802">南翔古镇</text><text x="1764" y="1994">长风公园</text><text x="2312" y="1706">家森林公园</text><text x="2281" y="1760">黄兴公园</text>
        <text x="701" y="2440">东方绿舟</text><text x="826" y="2419">上海朱家角</text><text x="827" y="2448">古镇旅游区</text><text x="1067" y="2453">南园</text><text x="1188" y="2446">佘山国家</text><text x="1177" y="2476">旅游度假区</text><text x="1704" y="2274">七宝老街</text><text x="2409" y="2408">周浦公园</text><text x="2269" y="2538">召稼楼</text><text x="2559" y="2700">新场古镇</text>
      </g>
      <g class="way">
        <text transform="translate(911 1678)rotate(28)">京沪</text><text transform="translate(963 1708)rotate(42)">高速</text><text transform="translate(705 2013)rotate(-7)">沪常高速</text><text transform="translate(1056 2013)rotate(8)">沪常高速</text>
        <text transform="translate(1888 1777)rotate(-5)">中环路</text><text transform="translate(2186 2242)rotate(-18)">中环路</text><text transform="translate(1645 2190)rotate(-25)">沪渝高速</text>
        <text transform="translate(1673 2392)rotate(30)">沪</text><text transform="translate(1656 2414)rotate(30)">昆</text><text transform="translate(1640 2434)rotate(30)">高</text><text transform="translate(1626 2453)rotate(30)">速</text>
        <text transform="translate(1894 2350)rotate(-8)">外环高速</text><text transform="translate(1947 2606)rotate(-13)">申嘉湖高速</text><text transform="translate(2407 2475)rotate(-10)">申嘉湖高速</text><text transform="translate(2766 2161)rotate(-26)">迎宾</text><text transform="translate(2826 2136)rotate(-20)">速</text>
      </g>
      <g class="way railway"><text transform="translate(1303 1735)rotate(12)">京沪高铁</text><text transform="translate(1534 1941)rotate(35)">京</text><text transform="translate(1549 1958)rotate(35)">沪</text><text transform="translate(1565 1978)rotate(35)">高</text><text transform="translate(1581 1996)rotate(35)">铁</text></g>
      <g class="way riverway"><text transform="translate(1830 1498)rotate(-20)">泾</text><text transform="translate(1288 2293)rotate(-12)">淀浦河</text><text transform="translate(873 2643)rotate(40)">泖河</text></g>
      <g class="way line"><text transform="translate(2179 1585)rotate(25)">何杨线</text></g>
      <g>
        <use href="#station" x="801" y="1607"/><use href="#tree" x="801" y="1687"/><use href="#station" x="1131" y="1679"/><use href="#school" x="1297" y="1777"/><use href="#temple" x="677" y="1847"/>
        <use href="#tree" x="1745" y="1593"/><use href="#school" x="1817" y="1675"/><use href="#temple" x="1565" y="1761"/><use href="#station" x="1843" y="1855"/><use href="#tree" x="1833" y="1985"/><use href="#plane" x="1679" y="2086"/>
        <use href="#tree" x="2277" y="1665"/><use href="#school" x="2132" y="1787"/><use href="#museum" x="2122" y="2066"/><use href="#tree" x="2213" y="1751"/>
        <use href="#temple" x="827" y="2377"/><use href="#temple" x="701" y="2399"/><use href="#tree" x="1067" y="2413"/><use href="#temple" x="1257" y="2451"/><use href="#school" x="1243" y="2581"/>
        <use href="#temple" x="1703" y="2233"/><use href="#station" x="1921" y="2229"/><use href="#museum" x="2097" y="2129"/><use href="#school" x="1943" y="2663"/>
        <use href="#tree" x="2409" y="2367"/><use href="#temple" x="2269" y="2497"/><use href="#temple" x="2557" y="2659"/>
      </g>
      <g class="shield">
        <use href="#sh-g" x="635" y="1610"/><text x="635" y="1618">G2</text><use href="#sh-g" x="867" y="1652"/><text x="867" y="1660">G2</text><use href="#sh-g" x="1085" y="1750"/><text x="1085" y="1758">G1501</text><use href="#sh-s" x="809" y="2000"/><text x="809" y="2008">S58</text><use href="#sh-s" x="1141" y="2016"/><text x="1141" y="2024">S58</text><use href="#sh-g" x="1339" y="1900"/><text x="1339" y="1908">G2</text>
        <use href="#sh-g" x="1387" y="1538"/><text x="1387" y="1546">G1501</text><use href="#sh-s" x="1967" y="1526"/><text x="1967" y="1534">S20</text><use href="#sh-s" x="1635" y="1620"/><text x="1635" y="1628">S6</text><use href="#sh-g" x="1709" y="1894"/><text x="1709" y="1902">G2</text><use href="#sh-g" x="1451" y="2092"/><text x="1451" y="2100">G15</text>
        <use href="#sh-g" x="2425" y="1568"/><text x="2425" y="1576">G1501</text><use href="#sh-g" x="2693" y="1614"/><text x="2693" y="1622">G40</text><use href="#sh-s" x="2545" y="1830"/><text x="2545" y="1838">S20</text>
        <use href="#sh-g" x="1081" y="2276"/><text x="1081" y="2284">G1501</text><use href="#sh-g" x="1033" y="2484"/><text x="1033" y="2492">G1501</text><use href="#sh-g" x="1165" y="2690"/>
        <use href="#sh-g" x="1555" y="2332"/><text x="1555" y="2340">G15</text><use href="#sh-s" x="1851" y="2464"/><text x="1851" y="2472">S4</text><use href="#sh-s" x="1793" y="2644"/><text x="1793" y="2652">S32</text><use href="#sh-g" x="1565" y="2644"/><text x="1565" y="2652">G15</text><use href="#sh-s" x="2101" y="2304"/><text x="2101" y="2312">S20</text>
        <use href="#sh-s" x="2620" y="2210"/><text x="2620" y="2218">S1</text><use href="#sh-s" x="2407" y="2248"/><text x="2407" y="2256">S20</text><use href="#sh-s" x="2613" y="2484"/><text x="2613" y="2492">S2</text><use href="#sh-s" x="2147" y="2574"/><text x="2147" y="2582">S32</text><use href="#sh-s" x="2863" y="2114"/>
      </g>
      <g class="shield dark"><use href="#sh-y" x="822" y="2546"/><text x="822" y="2552">S225</text><use href="#sh-y" x="1342" y="2442"/><text x="1342" y="2448">S224</text><use href="#sh-y" x="1788" y="2216"/><text x="1788" y="2222">S124</text><use href="#sh-y" x="2196" y="2110"/><text x="2196" y="2116">S202</text></g>
      <text class="amap" x="616" y="2671">高德地图</text>
      <text class="credit" x="745" y="2673">© 2017 AutoNavi - GS(2016)710号</text>
      <g class="spot">
        <use href="#pin-shape" class="cool" x="2197.700" y="1764"/><path d="M2171 1623H2257V1665H2171Z"/><text x="2214" y="1653">五角场</text>
        <use href="#pin-shape" class="cool" x="2133.700" y="2007"/><path d="M2107 1867H2169V1909H2107Z"/>
        <use href="#pin-shape" class="cool" x="2162" y="1962"/><use href="#pin-shape" class="cool" x="2169.700" y="1982"/><use href="#pin-shape" class="warm" x="2130" y="1982"/>
        <use href="#pin-shape" class="cool" x="2084" y="2004"/><path d="M2057 1863H2191V1905H2057Z"/><text x="2124" y="1893">上海博物馆</text>
        <use href="#pin-shape" class="cool" x="2215.700" y="1968"/><path d="M2189 1827H2299V1869H2189Z"/><text x="2244" y="1857">东方明珠</text>
        <path d="M2135 1821H2269V1863H2135Z"/><text x="2202" y="1851">上海海洋馆</text>
        <use href="#pin-shape" class="warm" x="2167.700" y="1818"/><path d="M2141 1677H2251V1719H2141Z"/><text x="2196" y="1707">同济大学</text>
        <use href="#pin-shape" class="cool" x="1995.700" y="1962"/><path d="M1969 1821H2055V1863H1969Z"/><text x="2012" y="1851">玉佛寺</text>
        <use href="#pin-shape" class="cool" x="2080" y="1982"/><path d="M2053 1841H2283V1883H2053Z"/><text x="2168" y="1871">上海杜莎夫人蜡像馆</text>
        <use href="#pin-shape" class="cool" x="2107.700" y="1857"/><path d="M2081 1715H2239V1757H2081Z"/><text x="2160" y="1745">上海鲁迅公园</text>
        <use href="#pin-shape" class="cool" x="2139.700" y="2155"/><path d="M2113 2013H2247V2055H2113Z"/><text x="2180" y="2043">中华艺术宫</text>
        <use href="#pin-shape" class="cool" x="856" y="2413"/><path d="M829 2271H915V2313H829Z"/><text x="872" y="2301">朱家角</text>
        <use href="#pin-shape" class="cool" x="1336" y="2461"/><path d="M1309 2319H1395V2361H1309Z"/><text x="1352" y="2349">欢乐谷</text>
        <use href="#pin-shape" class="warm" x="2664" y="2222"/>
      </g>
    </svg>
    <div class="popup">
      <span class="close">×</span>
      <h3>迪士尼</h3>
      <p>推荐游玩时间：4小时</p>
      <button>添加</button>
      <svg class="tail" viewBox="0 0 56 46"><path d="M7 0L0 46L56 0Z" fill="#fff"/></svg>
    </div>
  </div>
  <p class="note">注：红色景点为推荐景点，蓝色景点为普通景点，点击景点坐标选择景点</p>
  <button class="go">生成路线</button>
</main>
<footer>
  <div class="foot-main">
    <section class="foot-about"><h4>"网站名称"</h4><p class="address">上海曹安公路4800同济<br>大学嘉大荒软件学院</p><p>Github</p><p>+86 12345678901</p></section>
    <section class="foot-links"><h4>快速链接</h4><a>主页</a><a>规划路线</a><a>拼团</a></section>
    <section class="foot-links last"><h4>更多</h4><a>关于我们</a><a>加入我们</a><a>其他产品</a><a>FAQ</a></section>
  </div>
  <div class="foot-bottom">
    <p class="made">Designed and built with all the love in the world by a shaky team.<br>Maintained by the core team with the help of our contributors.</p>
    <p class="legal">Copyright©一个有zayy的项目组 All Rights Reserved（2016-）版权所有 复制必究。<br>当前版本： v1.0.0</p>
  </div>
</footer>
</body>
</html>
```
FILE: styles.css
```css
html { font-size: 18.2837px; }
* { box-sizing: border-box; margin: 0; padding: 0; }
body {
  font-family: "Liberation Sans", "Noto Sans CJK SC", sans-serif;
  font-size: 1.6rem;
  background: #fff;
  color: #263238;
  overflow-x: hidden;
}
h1, h2, h3, h4 { font-weight: 700; }
button { border: 0; font-family: inherit; color: #fff; background: #00aa90; }

.navbar {
  position: relative;
  display: flex;
  justify-content: space-between;
  align-items: center;
  height: 6rem;
  padding: 0 6.95rem 0 1.5rem;
  background: #ccefe8;
  box-shadow: 0 .1rem .5rem rgba(0, 0, 0, .4);
}
.brand { font-size: 1.8rem; color: #42b28c; }
.nav-links {
  display: flex;
  gap: 4rem;
  padding-top: .35rem;
  font-size: 1.8rem;
  line-height: 2rem;
  font-weight: 700;
  color: #00aa90;
}
.user-link { display: flex; align-items: center; }
.user-icon { width: 1.85rem; height: 1.8rem; }

.hero {
  height: 24rem;
  padding-top: 8.53rem;
  background: #00aa90;
  box-shadow: 0 .1rem .4rem rgba(0, 0, 0, .35);
}
.hero-title {
  display: flex;
  justify-content: center;
  align-items: center;
  gap: 1.6rem;
  font-size: 4.8rem;
  line-height: 6rem;
  letter-spacing: .14rem;
  color: #fff;
  text-shadow: .6rem .6rem 0 #24888a;
}
.comma { position: relative; left: .95rem; }
.bag-icon { width: 4.85rem; height: 4.15rem; margin-top: -.3rem; overflow: visible; filter: drop-shadow(.6rem .6rem 0 #24888a); }

.card {
  width: 122.6rem;
  height: 122.65rem;
  margin: 5rem 0 0 25.2rem;
  padding: 7.05rem 5.1rem 0;
  border-radius: .2rem;
  box-shadow: 0 0 .4rem rgba(0, 0, 0, .25);
}
.card-head {
  display: flex;
  align-items: center;
  gap: 3.7rem;
  height: 4rem;
}
.card-head i { flex: 1; height: .1rem; margin-top: .15rem; background: #cddcdc; }
.card-head h2 { font-size: 3.2rem; letter-spacing: .1rem; line-height: 4rem; color: #00aa90; }
.row { display: grid; }
.row label { display: flex; align-items: center; font-size: 1.9rem; font-weight: 700; line-height: 2rem; }
.dates { grid-template-columns: 41.9rem 1fr; margin-top: 5.1rem; }
.date {
  width: 11.55rem;
  height: 3.3rem;
  margin-left: .45rem;
  padding-left: .55rem;
  border: .25rem solid #d0e3dd;
  border-radius: .15rem;
  box-shadow: 0 .05rem .2rem rgba(0, 0, 0, .3);
  font-size: 1.6rem;
  font-weight: 400;
  line-height: 2.8rem;
  color: #000;
}
.places { grid-template-columns: 41.55rem 1fr; margin-top: 4.95rem; }
.select {
  display: flex;
  justify-content: space-between;
  align-items: center;
  width: 15rem;
  height: 4rem;
  margin-left: .3rem;
  padding: 0 1.35rem 0 1rem;
  border-radius: .2rem;
  background: #00aa90;
  box-shadow: 0 .05rem .35rem rgba(0, 60, 50, .5);
  font-size: 1.6rem;
  font-weight: 400;
  color: #fff;
}
.select b {
  width: 1.8rem;
  height: 1.5rem;
  clip-path: polygon(0 0, 100% 0, 50% 100%);
  background: #bfeae4;
}
.picked { display: flex; align-items: center; gap: .5rem; height: 2.6rem; margin-top: 6rem; }
.picked-label { font-size: 1.92rem; font-weight: 700; }
.tag {
  height: 2.6rem;
  padding: 0 1rem;
  border-radius: 1.3rem;
  background: #005ab0;
  box-shadow: 0 .15rem .25rem rgba(0, 0, 0, .6);
  font-size: 1.445rem;
  font-weight: 500;
  line-height: 2.6rem;
  color: #fff;
}
.tag.hot { background: #d0104c; }

.map {
  position: relative;
  width: 112.4rem;
  height: 60rem;
  margin-top: 2.1rem;
  box-shadow: 0 0 .5rem rgba(0, 0, 0, .25);
}
.map-canvas { display: block; width: 100%; height: 100%; }
.map-canvas text { font-family: "Liberation Sans", "Noto Sans CJK SC", sans-serif; }
.map-canvas path.a, .map-canvas path.b, .map-canvas path.c,
.map-canvas path.d, .map-canvas path.e, .map-canvas path.f { vector-effect: non-scaling-stroke; }
path.a { transform: translate(600px, 1470px) scale(.484694, .395408); }
path.b { transform: translate(1350px, 1470px) scale(.484694, .395408); }
path.c { transform: translate(2100px, 1470px) scale(.491071, .395408); }
path.d { transform: translate(600px, 2080px) scale(.484694, .433673); }
path.e { transform: translate(1350px, 2080px) scale(.484694, .433673); }
path.f { transform: translate(2100px, 2080px) scale(.491071, .433673); }
.green { fill: #cfe6b4; }
.water { fill: #b3d5ea; }
.stream, .river { fill: none; stroke: #b3d5ea; stroke-linejoin: round; stroke-linecap: round; }
.stream { stroke-width: 2.2px; }
.river { stroke-width: 18px; }
.minor-case, .minor-fill, .major-case, .major-fill, .motor-case, .motor-fill,
.rail, .rail-dash, .metro { fill: none; stroke-linejoin: round; }
.minor-case { stroke: #f9dca6; stroke-width: 5.2px; }
.minor-fill { stroke: #fff6e1; stroke-width: 2.2px; }
.major-case { stroke: #e9a657; stroke-width: 8.5px; }
.major-fill { stroke: #ffcf66; stroke-width: 5.6px; }
.motor-case { stroke: #e8963c; stroke-width: 12.5px; }
.motor-fill { stroke: #ffb05a; stroke-width: 9.5px; }
.rail { stroke-width: 5px; }
.gray { stroke: #a5a5a5; }
.blue { stroke: #5f7bb4; }
.rail-dash { stroke: #fff; stroke-width: 1.8px; stroke-dasharray: 10 12; }
.metro { stroke-width: 4px; }
.district { font-size: 24px; font-weight: 500; text-anchor: middle; fill: #5a90e6; }
.district text { fill: #fff; }
.town, .way { text-anchor: middle; paint-order: stroke; stroke: #fdfaf2; stroke-width: 2.5px; }
.town { font-size: 24px; fill: #4f6274; }
.scenic { fill: #456a10; }
.way { font-size: 23px; font-weight: 500; letter-spacing: 3px; fill: #7f4f0c; stroke: #ffd98a; stroke-width: 2px; }
.railway { fill: #2d4f8e; stroke: #dfe6f2; }
.riverway { fill: #587c9c; stroke: #e6f0f5; font-weight: 400; }
.line { letter-spacing: 2px; fill: #444; stroke: #fff; }
.shield { font-weight: 700; text-anchor: middle; }
.shield text {
  fill: #fff;
  font-size: 19.5px;
  transform: translateY(.5px) scaleX(.72);
  transform-box: fill-box;
  transform-origin: center;
}
.shield.dark text { fill: #514115; font-size: 17.5px; }
.map-canvas .amap { font-size: 28px; letter-spacing: 2px; fill: #8fc8ec; paint-order: stroke; stroke: #fff; stroke-width: 3px; font-weight: 700; }
.credit { font-size: 22px; fill: #000; }
.spot { font-size: 24px; text-anchor: middle; }
.spot > path { fill: #fff; stroke: #0000f0; stroke-width: 2px; }
.cool { fill: #3a87e6; stroke: #2f74cd; }
.warm { fill: #c02c4c; stroke: #a62442; }

.popup {
  position: absolute;
  left: 95.8rem;
  top: 20.75rem;
  width: 14.35rem;
  height: 12.4rem;
  padding: 2.35rem 1rem 0;
  background: #fff;
  border: .1rem solid #ccc;
  border-radius: .15rem;
  box-shadow: 0 0 .7rem rgba(40, 30, 130, .6);
  color: #000;
}
.popup h3 { font-size: 1.4rem; line-height: 2rem; text-align: center; margin-left: -.5rem; margin-top: -.05rem; }
.popup p { font-size: 1.2rem; line-height: 1.6rem; font-weight: 700; white-space: nowrap; margin-top: 1.6rem; }
.popup button {
  display: block;
  width: 11.6rem;
  height: 2.2rem;
  margin-top: 1.5rem;
  border-radius: .3rem;
  box-shadow: 0 .05rem .5rem rgba(0, 120, 100, .5);
  font-size: 1.2rem;
  font-weight: 700;
  line-height: 2.2rem;
}
.close { position: absolute; right: .4rem; top: .4rem; font-size: 2.1rem; line-height: 1.5rem; font-weight: 700; color: #bfbfbf; }
.tail { position: absolute; left: 5.55rem; top: 12.2rem; width: 2.8rem; height: 2.3rem; }

.note { margin-top: 1.15rem; font-size: 1.6rem; line-height: 2rem; color: #e57373; }
.go {
  display: block;
  width: 45rem;
  height: 5.4rem;
  margin: 5rem auto 0;
  border-radius: .3rem;
  box-shadow: 0 .05rem .35rem rgba(0, 80, 65, .5);
  font-size: 2.4rem;
  line-height: 5.5rem;
}

footer { margin-top: 30.05rem; background: #007a6a; box-shadow: 0 0 .5rem rgba(0, 0, 0, .7); color: #cce8e3; }
.foot-main {
  display: grid;
  grid-template-columns: 25.2rem 25.35rem 1fr;
  height: 26.3rem;
  padding: 5rem 0 0 50.35rem;
}
.foot-main section {
  height: 14.05rem;
  background: linear-gradient(#6fb3a9, #6fb3a9) right 1.05rem / .1rem 13rem no-repeat;
}
.foot-main .last { background: none; }
.foot-main h4 { font-size: 1.9rem; line-height: 2rem; margin-bottom: 1.4rem; color: #9adde4; }
.foot-about p { line-height: 2rem; margin-top: .75rem; }
.foot-about .address { line-height: 2.2rem; margin-top: 0; }
.foot-about .address + p { margin-top: .8rem; }
.foot-links { padding-left: 8.5rem; }
.foot-links.last { padding-left: 8.2rem; }
.foot-links a { display: block; line-height: 2.2rem; margin-bottom: .98rem; letter-spacing: .07rem; }
.foot-links a:nth-child(5) { line-height: 1.7rem; }
.foot-bottom {
  height: 10rem;
  padding-top: 1.53rem;
  background: #00695b;
  text-align: center;
  font-size: 1.28rem;
}
.made { line-height: 1.5rem; }
.legal { margin-top: 1.6rem; line-height: 1.75rem; }
```
